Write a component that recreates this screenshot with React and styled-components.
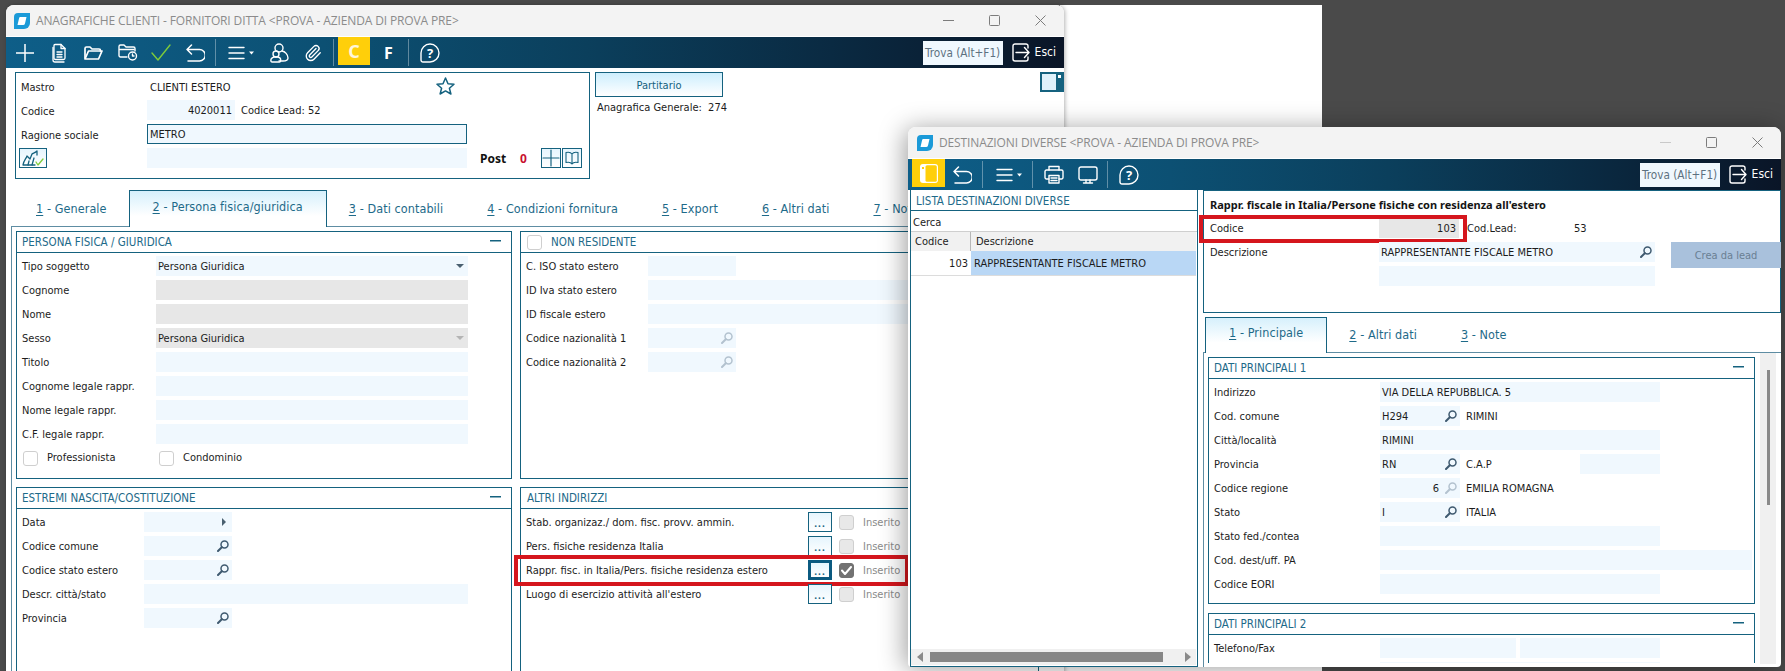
import React from 'react';
import styled, { createGlobalStyle } from 'styled-components';

const TEAL = '#15627f';
const SOFT = '#5e8da3';
const FIELD = '#f0f8fe';
const GREY = '#e7e7e7';

const Global = createGlobalStyle`
  html, body { margin: 0; padding: 0; width: 1785px; height: 671px; overflow: hidden; background: #4a4a4a; }
  * { box-sizing: border-box; }
  body { font-family: "DejaVu Sans Condensed", "Noto Sans", sans-serif; font-size: 11px; color: #1c1c1c; }
`;

const Desktop = styled.div`
  position: relative; width: 1785px; height: 671px; overflow: hidden; background: #4a4a4a;
`;
const BackWindow = styled.div`
  position: absolute; left: 1060px; top: 5px; width: 262px; height: 666px; background: #fff;
`;
const Win = styled.div`
  position: absolute; left: ${p => p.$x}px; top: ${p => p.$y}px; width: ${p => p.$w}px; height: ${p => p.$h}px;
  background: #fff; border-radius: 8px 8px 4px 4px; overflow: hidden;
  display: flex; flex-direction: column;
`;
const WinShadow = styled(Win)`
  box-shadow: ${p => p.$strong ? '-3px 2px 26px rgba(0,0,0,.38)' : '1px 0 4px rgba(0,0,0,.3)'};
  overflow: visible;
`;
const Clip = styled.div`
  display: flex; flex-direction: column; width: 100%; height: 100%; overflow: hidden; border-radius: 8px 8px 4px 4px;
`;
const TitleBar = styled.div`
  flex: none; height: ${p => p.$h}px; background: #f3f3f3; display: flex; align-items: center;
  padding-left: ${p => p.$pl}px; padding-right: 18px; border-bottom: 1px solid #fff;
`;
const TitleText = styled.span`
  font-family: "Open Sans", sans-serif; font-size: 12px; color: #8b8b8b; margin-left: 6px; white-space: nowrap;
  letter-spacing: -.13px;
`;
const Controls = styled.div`
  margin-left: auto; display: flex; gap: 35px; align-items: center; color: #7c7c7c;
`;
const CtlSvg = styled.svg`
  width: 11px; height: 11px; fill: none; stroke: currentColor; stroke-width: 1; display: block;
  opacity: ${p => p.$faint ? .35 : 1};
`;
const Toolbar = styled.div`
  flex: none; height: 31px; display: flex; align-items: center; color: #fff;
  padding-left: ${p => p.$pl}px; padding-right: 8px;
  background: linear-gradient(90deg, #0e5e88 0%, #0c5073 30%, #0b3f5c 55%, #0a2a42 78%, #0a1527 100%);
`;
const Slot = styled.div`
  flex: none; margin-left: ${p => p.$gap || 0}px; display: flex; align-items: center; justify-content: center; height: 100%;
`;
const Sep = styled.div`
  flex: none; width: 1px; height: 27px; background: rgba(255,255,255,.35); margin-left: ${p => p.$gap || 0}px;
`;
const Sv = styled.svg`
  display: block; fill: none; stroke: ${p => p.$c || 'currentColor'}; stroke-width: ${p => p.$sw || 1.4};
  stroke-linecap: round; stroke-linejoin: round;
`;
const YellowKey = styled.div`
  flex: none; height: 28px; align-self: flex-start; width: ${p => p.$w}px; margin-left: ${p => p.$gap || 0}px; background: #ffcf0a;
  display: flex; align-items: center; justify-content: center;
  color: #fff6d8; font: 700 18px "Noto Sans", sans-serif;
`;
const FKey = styled.div`
  flex: none; margin-left: 14px; color: #fff; font: 700 16px "Noto Sans", sans-serif;
`;
const Trova = styled.div`
  margin-left: auto; flex: none; width: 80px; height: 24px; background: #f0f8fe; color: #5d7180;
  display: flex; align-items: center; justify-content: center; font-size: 11.7px; white-space: nowrap;
`;
const EsciText = styled.span`
  margin-left: 5px; font-size: 12px; color: #fff; margin-top: -2px;
`;

const Logo = () => (
  <svg width="16" height="16" viewBox="0 0 16 16" style={{ flex: 'none' }}>
    <path d="M4 0H16V10a6 6 0 0 1-6 6H0V4a4 4 0 0 1 4-4z" fill="#1b9ad8" />
    <path d="M6 4H12.5L11 10.5a2 2 0 0 1-2 1.5H3.5L5 5.5A2 2 0 0 1 6 4z" fill="#fff" />
  </svg>
);
const WinControls = ({ faint }) => (
  <Controls>
    <CtlSvg $faint={faint} viewBox="0 0 11 11"><path d="M0 5.5H11" /></CtlSvg>
    <CtlSvg viewBox="0 0 11 11"><rect x=".5" y=".5" width="10" height="10" rx="1" /></CtlSvg>
    <CtlSvg viewBox="0 0 11 11"><path d="M.5 .5L10.5 10.5M10.5 .5L.5 10.5" /></CtlSvg>
  </Controls>
);
const PlusIc = () => <Sv width="18" height="18" viewBox="0 0 18 18" $sw={1.5}><path d="M9 0V18M0 9H18" /></Sv>;
const DocIc = () => (
  <Sv width="16" height="20" viewBox="0 0 16 20" $sw={1.3}>
    <path d="M3 1.5h6l4 4V15a1.5 1.5 0 0 1-1.5 1.5h-8A1.5 1.5 0 0 1 2 15V2.5a1 1 0 0 1 1-1z" />
    <path d="M9 1.5V5.5H13M5 9H10M5 11.5H10M5 14H10" />
    <path d="M1 4.5V17a2 2 0 0 0 2 2H12" />
  </Sv>
);
const FolderIc = () => (
  <Sv width="19" height="14" viewBox="0 0 19 14" $sw={1.7}>
    <path d="M1 12V2.5A1.5 1.5 0 0 1 2.5 1H6l2 2h7a1.5 1.5 0 0 1 1.5 1.5V5" />
    <path d="M1 13H14.5L18 5H4.5L1 13z" />
  </Sv>
);
const FolderClockIc = () => (
  <Sv width="20" height="17" viewBox="0 0 20 17" $sw={1.4}>
    <path d="M9 13H2.5A1.5 1.5 0 0 1 1 11.5V2.5A1.5 1.5 0 0 1 2.5 1H6l2 2h7.5A1.5 1.5 0 0 1 17 4.5V7" />
    <path d="M1.5 5.5H16" />
    <circle cx="14.5" cy="12" r="4" />
    <path d="M14.5 10V12H16" />
  </Sv>
);
const CheckIc = () => <Sv width="20" height="17" viewBox="0 0 20 17" $c="#7ecb3a" $sw={1.4}><path d="M1 9L7 16L19 1" /></Sv>;
const UndoIc = () => (
  <Sv width="19" height="18" viewBox="0 0 19 18" $sw={1.5}>
    <path d="M5.5 1L1 5.5L5.5 10M1 5.5H13.5a4.5 4.5 0 0 1 0 11.5H2" />
  </Sv>
);
const MenuIc = () => (
  <Sv width="26" height="14" viewBox="0 0 26 14" $sw={1.4}>
    <path d="M1 1.5H16M1 7H16M1 12.5H16" />
    <path d="M21 5.5H26L23.5 8.5z" fill="#fff" stroke="none" />
  </Sv>
);
const UsersIc = () => (
  <Sv width="19" height="20" viewBox="0 0 19 20" $sw={1.4}>
    <circle cx="9" cy="5" r="4" />
    <circle cx="6" cy="11" r="3" />
    <path d="M12 8c3 .5 6 3.5 6 7 0 2-2 3-5 3H9" />
    <path d="M1 18c-.6-2 1-3.5 3-4h4c2 .5 3 2 2.5 4 0 .6-.5 1-1 1H2c-.5 0-1-.4-1-1z" />
  </Sv>
);
const ClipIc = () => (
  <Sv width="18" height="20" viewBox="0 0 24 24" $sw={1.8}>
    <path d="m16 6-8.414 8.586a2 2 0 0 0 2.829 2.829l8.414-8.586a4 4 0 1 0-5.657-5.657l-8.379 8.551a6 6 0 1 0 8.485 8.485l8.379-8.551" />
  </Sv>
);
const HelpIc = () => (
  <Sv width="20" height="20" viewBox="0 0 20 20" $sw={1.4}>
    <path d="M10 1a9 9 0 0 1 0 18H3a2 2 0 0 1-2-2V10a9 9 0 0 1 9-9z" />
    <text x="10" y="15" textAnchor="middle" fontSize="13" fontFamily="Noto Sans" fontWeight="700" fill="#fff" stroke="none">?</text>
  </Sv>
);
const EsciIc = () => (
  <Sv width="18" height="19" viewBox="0 0 18 19" $sw={1.4}>
    <path d="M16 5V3a2 2 0 0 0-2-2H3a2 2 0 0 0-2 2v13a2 2 0 0 0 2 2h11a2 2 0 0 0 2-2v-2" />
    <path d="M4 9.5H17M12.5 4.5L17 9.5L12.5 14.5" />
  </Sv>
);
const PrinterIc = () => (
  <Sv width="20" height="19" viewBox="0 0 20 19" $sw={1.4}>
    <path d="M5 5V1.5H15V5" />
    <path d="M5 14H2.5A1.5 1.5 0 0 1 1 12.5V6.5A1.5 1.5 0 0 1 2.5 5h15A1.5 1.5 0 0 1 19 6.5v6a1.5 1.5 0 0 1-1.5 1.5H15" />
    <rect x="5" y="10.5" width="10" height="7.5" />
    <path d="M7 13H13M7 15.5H13" />
  </Sv>
);
const MonitorIc = () => (
  <Sv width="20" height="18" viewBox="0 0 20 18" $sw={1.4}>
    <rect x="1" y="1" width="18" height="13" rx="2" />
    <path d="M8 14V17M12 14V17M5.5 17H14.5" />
  </Sv>
);
const PanelIc = () => (
  <svg width="18" height="19" viewBox="0 0 18 19" style={{ display: 'block' }}>
    <rect x="0" y="0" width="18" height="19" rx="3" fill="#fff" />
    <rect x="5.5" y="1.2" width="11.3" height="16.6" rx="1.6" fill="#ffcf0a" />
    <rect x="2" y="3" width="2" height="2" fill="#ffcf0a" />
  </svg>
);
const SearchIc = ({ light }) => (
  <Sv width="12" height="12" viewBox="0 0 12 12" $c={light ? '#b3c2cf' : '#3f5a70'} $sw={1.5}>
    <circle cx="7.5" cy="4.5" r="3.5" />
    <path d="M4.8 7.2L1 11" strokeWidth="2" />
  </Sv>
);

const Body = styled.div`
  flex: 1; min-height: 0; display: flex; flex-direction: column;
`;
const TopArea = styled.div`
  flex: none; height: 122px; padding: 4px 0 0 9px; display: flex; align-items: flex-start;
`;
const MasterBox = styled.div`
  flex: none; width: 575px; height: 107px; border: 1px solid ${TEAL}; padding: 3px 0 0 5px;
  display: flex; flex-direction: column; gap: 4px;
`;
const MasterRow = styled.div`
  height: 20px; display: flex; align-items: center; position: relative;
`;
const MasterLabel = styled.span`
  flex: none; width: 126px; padding-top: 2px;
`;
const Field = styled.div`
  flex: none; width: ${p => p.$w}px; height: 20px; background: ${p => p.$off ? GREY : FIELD};
  border: ${p => p.$boxed ? `1px solid ${TEAL}` : 'none'};
  display: flex; align-items: center; justify-content: ${p => p.$right ? 'flex-end' : 'flex-start'};
  padding: 0 ${p => p.$pr ?? 3}px 0 ${p => p.$pl ?? 2}px; white-space: nowrap;
  margin-left: ${p => p.$gap || 0}px;
`;
const FieldEnd = styled.span`
  margin-left: auto; display: flex; align-items: center;
`;
const FieldNum = styled.span`
  margin-right: 6px; margin-left: auto;
`;
const Note = styled.span`
  margin-left: ${p => p.$gap || 0}px; white-space: nowrap; width: ${p => p.$w ? p.$w + 'px' : 'auto'}; flex: none; padding-top: 1px;
`;
const Value = styled.span`
  margin-left: ${p => p.$gap || 0}px; white-space: nowrap; padding-top: ${p => p.$pt || 0}px;
`;
const StarSlot = styled.span`
  position: absolute; left: 415px; top: 1px; display: block;
`;
const SquareBtn = styled.div`
  flex: none; width: ${p => p.$w || 20}px; height: 20px; border: 1px solid ${TEAL}; display: flex; align-items: center; justify-content: center;
  margin-left: ${p => p.$gap || 0}px; background: linear-gradient(#e6f5fd, #fff);
`;
const Post = styled.b`
  margin-left: 13px; width: 27px; flex: none; font-family: "Noto Sans", sans-serif; font-size: 12px; color: #111;
`;
const PostCount = styled.b`
  margin-left: 13px; width: 15px; flex: none; font-family: "Noto Sans", sans-serif; font-size: 12px; color: #c8102e;
`;
const SideCol = styled.div`
  flex: none; margin-left: 5px; width: 160px; display: flex; flex-direction: column;
`;
const Partitario = styled.div`
  width: 128px; height: 25px; border: 1px solid ${TEAL}; color: ${TEAL}; font-size: 11px; padding-top: 1px;
  background: linear-gradient(#cdeefd, #fff); display: flex; align-items: center; justify-content: center;
`;
const SideNote = styled.div`
  margin: 4px 0 0 2px; white-space: nowrap;
`;
const ToggleSlot = styled.div`
  margin-left: auto; flex: none;
`;
const Tabs = styled.div`
  flex: none; height: ${p => p.$h}px; display: flex; align-items: stretch; margin-left: ${p => p.$ml}px; margin-top: ${p => p.$mt || 0}px;
`;
const Tab = styled.div`
  flex: none; padding: 0 ${p => p.$active ? 23 : 22}px; display: flex; align-items: center; font-size: 12.5px; color: #1e6a89;
  white-space: nowrap; letter-spacing: .08px;
  ${p => p.$active ? `
    border: 1px solid ${TEAL}; border-bottom: none; position: relative; z-index: 1; margin-bottom: -1px;
    background: linear-gradient(#d6f0fc, #fff 70%); padding-bottom: 6px;
  ` : ''}
`;
const Panel1 = styled.div`
  flex: 1; margin-left: 5px; border-top: 1px solid ${SOFT}; border-left: 1px solid ${SOFT}; padding: 4px 0 0 4px;
  display: grid; grid-template-columns: 496px 519px; grid-template-rows: 248px 240px; gap: 8px;
`;
const Group = styled.section`
  border: 1px solid ${TEAL}; height: ${p => p.$h ? p.$h + 'px' : 'auto'}; width: ${p => p.$w ? p.$w + 'px' : 'auto'};
  margin-top: ${p => p.$mt || 0}px; flex: none;
`;
const GroupHead = styled.header`
  height: 20px; border-bottom: 1px solid ${TEAL}; box-sizing: content-box; display: flex; align-items: center;
  padding: 0 10px 0 ${p => p.$pl ?? 5}px; color: #1e6a89; font-size: 11.5px; white-space: nowrap;
`;
const Minus = styled.i`
  margin-left: auto; width: 11px; height: 1px; background: ${TEAL}; display: block; margin-top: -3px; box-shadow: 0 .5px 0 ${TEAL};
`;
const GroupBody = styled.div`
  padding: 3px 0 0 5px; display: flex; flex-direction: column; gap: 4px;
`;
const Row = styled.div`
  height: 20px; display: flex; align-items: center; position: relative; flex: none; white-space: nowrap;
`;
const Label = styled.span`
  flex: none; width: ${p => p.$w}px; padding-top: 1px;
`;
const Caret = styled.i`
  margin-left: auto; width: 0; height: 0; border-left: 4px solid transparent; border-right: 4px solid transparent;
  border-top: 4px solid ${p => p.$off ? '#b4b4b4' : '#4a6070'}; display: block;
`;
const CaretRight = styled.i`
  margin-left: auto; margin-right: 3px; width: 0; height: 0; border-top: 4px solid transparent; border-bottom: 4px solid transparent;
  border-left: 4px solid #4a6070; display: block; margin-top: -1px;
`;
const Check = styled.span`
  flex: none; width: 15px; height: 15px; border: 1px solid #cfcfcf; border-radius: 3px; display: flex; align-items: center; justify-content: center;
  background: ${p => p.$on ? '#727272' : p.$off ? '#e8e8e8' : '#fff'}; border-color: ${p => p.$on ? '#727272' : '#cfcfcf'};
  margin-left: ${p => p.$gap || 0}px;
`;
const CheckLabel = styled.span`
  flex: none; margin-left: 9px; padding-bottom: 2px; width: ${p => p.$w ? p.$w + 'px' : 'auto'};
`;
const CheckRow = styled(Row)`
  padding-left: 1px;
`;
const Dots = styled.div`
  flex: none; width: 24px; height: 20px; border: ${p => p.$focus ? `3px solid #0b5a80` : `1px solid ${TEAL}`};
  color: ${TEAL}; display: flex; align-items: flex-end; justify-content: center; padding-bottom: ${p => p.$focus ? 1 : 3}px;
  font: 700 10px "Noto Sans", sans-serif; letter-spacing: 1px; background: linear-gradient(#e6f5fd, #fff); line-height: 1;
`;
const Inserito = styled.span`
  flex: none; margin-left: 9px; color: #8a8a8a;
`;
const RedFrame = styled.div`
  position: absolute; left: ${p => p.$x}px; top: ${p => p.$y}px; width: ${p => p.$w}px; height: ${p => p.$h}px;
  border: 4px solid #d5161d; pointer-events: none;
`;
const Split = styled.div`
  flex: 1; min-height: 0; display: flex; padding-left: 2px;
`;
const ListPane = styled.div`
  flex: none; width: 288px; border: 1px solid ${TEAL}; border-top: none; display: flex; flex-direction: column; padding-bottom: 1px;
`;
const ListHead = styled.div`
  flex: none; height: 21px; border-bottom: 1px solid ${TEAL}; padding: 1px 0 0 5px; display: flex; align-items: center;
  color: #1e6a89; font-size: 11.5px;
`;
const Search = styled.div`
  flex: none; height: 21px; border-bottom: 1px solid #cfcfcf; padding: 2px 0 0 2px; display: flex; align-items: center;
`;
const Grid = styled.div`
  display: grid; grid-template-columns: 60px 1fr; margin-right: 1px;
`;
const HeadCell = styled.div`
  height: 19px; background: #f1f1f1; display: flex; align-items: center; padding-left: ${p => p.$pl}px;
  border-right: ${p => p.$div ? '1px solid #b7b7b7' : 'none'};
`;
const Cell = styled.div`
  height: 25px; display: flex; align-items: center; border-bottom: 1px solid #dcdcdc; white-space: nowrap;
  justify-content: ${p => p.$right ? 'flex-end' : 'flex-start'}; padding: 0 3px;
  background: ${p => p.$sel ? '#b9d7f5' : '#fff'};
`;
const HScroll = styled.div`
  margin-top: auto; height: 16px; background: #f0f0f0; display: flex; align-items: center; margin-right: 1px; padding: 0 6px;
`;
const ArrowL = styled.i`
  width: 0; height: 0; border-top: 5px solid transparent; border-bottom: 5px solid transparent; border-right: 6px solid #8a8a8a; display: block; flex: none;
`;
const ArrowR = styled.i`
  width: 0; height: 0; border-top: 5px solid transparent; border-bottom: 5px solid transparent; border-left: 6px solid #8a8a8a; display: block; flex: none;
`;
const HThumb = styled.div`
  flex: none; width: 233px; height: 10px; background: #868686; margin: 0 22px 0 7px;
`;
const DetailPane = styled.div`
  flex: none; width: 578px; margin-left: 5px; display: flex; flex-direction: column;
`;
const Header2 = styled.div`
  flex: none; height: 123px; border: 1px solid ${TEAL}; padding: 4px 0 0 6px;
`;
const Header2Title = styled.div`
  height: 23px; font: 700 11px "Noto Sans", sans-serif; color: #151515; padding-top: 2px; white-space: nowrap;
`;
const Header2Rows = styled.div`
  display: flex; flex-direction: column; gap: 4px;
`;
const Crea = styled.div`
  flex: none; width: 110px; height: 26px; margin-left: 16px; background: #a9c1dc; color: #6a7f93; display: flex; align-items: center; justify-content: center;
  align-self: flex-start;
`;
const Panel2 = styled.div`
  flex: 1; min-height: 0; border-top: 1px solid ${SOFT}; border-left: 1px solid ${SOFT}; display: flex; padding-left: 4px;
`;
const PanelClip = styled.div`
  flex: none; width: 547px; height: 310px; padding-top: 4px; overflow: hidden;
`;
const VScroll = styled.div`
  flex: none; width: 16px; height: 311px; margin-left: 5px; background: #f0f0f0; padding: 17px 0 0 7px;
`;
const VThumb = styled.div`
  width: 3px; height: 135px; background: #8a8a8a;
`;

const TrovaEsci = () => (
  <>
    <Trova>Trova (Alt+F1)</Trova>
    <Slot $gap={9}><EsciIc /></Slot>
    <EsciText>Esci</EsciText>
  </>
);
const Lens = ({ light }) => <FieldEnd><SearchIc light={light} /></FieldEnd>;
const Tick = () => (
  <Sv width="11" height="9" viewBox="0 0 11 9" $c="#fff" $sw={2}><path d="M1 4.5L4 8L10 1" /></Sv>
);
const Bare = ({ label, w, fw, off }) => (
  <Row><Label $w={w}>{label}</Label><Field $w={fw} $off={off} /></Row>
);
const U = styled.u`text-underline-offset: 2px;`;

const personaRows = ['Titolo', 'Cognome legale rappr.', 'Nome legale rappr.', 'C.F. legale rappr.'];
const altri = [
  ['Stab. organizaz./ dom. fisc. provv. ammin.'],
  ['Pers. fisiche residenza Italia'],
  ['Rappr. fisc. in Italia/Pers. fisiche residenza estero', true],
  ["Luogo di esercizio attività all'estero"],
];

export default function App() {
  return (
    <Desktop>
      <Global />
      <BackWindow />
      <WinShadow $x={6} $y={5} $w={1058} $h={680}>
        <Clip>
          <TitleBar $h={32} $pl={8}>
            <Logo />
            <TitleText>ANAGRAFICHE CLIENTI - FORNITORI DITTA &lt;PROVA - AZIENDA DI PROVA PRE&gt;</TitleText>
            <WinControls />
          </TitleBar>
          <Toolbar $pl={10}>
            <Slot><PlusIc /></Slot>
            <Slot $gap={18}><DocIc /></Slot>
            <Slot $gap={16}><FolderIc /></Slot>
            <Slot $gap={15}><FolderClockIc /></Slot>
            <Slot $gap={13}><CheckIc /></Slot>
            <Slot $gap={15}><UndoIc /></Slot>
            <Sep $gap={10} />
            <Slot $gap={12}><MenuIc /></Slot>
            <Slot $gap={16}><UsersIc /></Slot>
            <Slot $gap={15}><ClipIc /></Slot>
            <Sep $gap={11} />
            <YellowKey $w={32} $gap={4}>C</YellowKey>
            <FKey>F</FKey>
            <Sep $gap={15} />
            <Slot $gap={11}><HelpIc /></Slot>
            <TrovaEsci />
          </Toolbar>
          <Body>
            <TopArea>
              <MasterBox>
                <MasterRow>
                  <MasterLabel>Mastro</MasterLabel>
                  <Value $gap={3} $pt={2}>CLIENTI ESTERO</Value>
                  <StarSlot>
                    <Sv width="19" height="18" viewBox="0 0 19 18" $c={TEAL} $sw={1.5}>
                      <path d="M9.5 1L12 6.8L18 7.3L13.4 11.2L14.9 17L9.5 13.9L4.1 17L5.6 11.2L1 7.3L7 6.8z" />
                    </Sv>
                  </StarSlot>
                </MasterRow>
                <MasterRow>
                  <MasterLabel>Codice</MasterLabel>
                  <Field $w={88} $right>4020011</Field>
                  <Note $gap={6}>Codice Lead: 52</Note>
                </MasterRow>
                <MasterRow>
                  <MasterLabel>Ragione sociale</MasterLabel>
                  <Field $w={320} $boxed>METRO</Field>
                </MasterRow>
                <MasterRow>
                  <SquareBtn $w={28} $gap={-2}>
                    <Sv width="22" height="17" viewBox="0 0 22 17" $c={TEAL} $sw={1.3}>
                      <path d="M1 15C2 10 4 9 5 6L8 9L10 4C11 3 13 3 15 1V5M1 15H13" />
                      <path d="M6 15L7 11M10 15L12 8" />
                      <path d="M14 12L16 15L21 9" stroke="#7ecb3a" />
                    </Sv>
                  </SquareBtn>
                  <Field $w={320} $gap={100} />
                  <Post>Post</Post>
                  <PostCount>0</PostCount>
                  <SquareBtn $gap={6}>
                    <Sv width="18" height="18" viewBox="0 0 18 18" $c={TEAL} $sw={1.2}><path d="M9 1V17M1 9H17" /></Sv>
                  </SquareBtn>
                  <SquareBtn $gap={1}>
                    <Sv width="16" height="14" viewBox="0 0 16 14" $c={TEAL} $sw={1.1}>
                      <path d="M8 3C7 1.5 4 1 2 1.5V11.5C4 11 7 11.5 8 13C9 11.5 12 11 14 11.5V1.5C12 1 9 1.5 8 3zM8 3V13" />
                    </Sv>
                  </SquareBtn>
                </MasterRow>
              </MasterBox>
              <SideCol>
                <Partitario>Partitario</Partitario>
                <SideNote>Anagrafica Generale:&nbsp; 274</SideNote>
              </SideCol>
              <ToggleSlot>
                <svg width="24" height="20" viewBox="0 0 24 20" style={{ display: 'block' }}>
                  <rect width="24" height="20" fill="#15627f" />
                  <rect x="2" y="2" width="14" height="16" fill="#dff1fb" />
                  <rect x="18" y="3" width="3" height="3" fill="#fff" />
                </svg>
              </ToggleSlot>
            </TopArea>
            <Tabs $h={36} $ml={8}>
              <Tab><U>1</U>&nbsp;- Generale</Tab>
              <Tab $active><U>2</U>&nbsp;- Persona fisica/giuridica</Tab>
              <Tab><U>3</U>&nbsp;- Dati contabili</Tab>
              <Tab><U>4</U>&nbsp;- Condizioni fornitura</Tab>
              <Tab><U>5</U>&nbsp;- Export</Tab>
              <Tab><U>6</U>&nbsp;- Altri dati</Tab>
              <Tab><U>7</U>&nbsp;- Note</Tab>
            </Tabs>
            <Panel1>
              <Group>
                <GroupHead>PERSONA FISICA / GIURIDICA<Minus /></GroupHead>
                <GroupBody>
                  <Row>
                    <Label $w={134}>Tipo soggetto</Label>
                    <Field $w={312} $pr={4}>Persona Giuridica<Caret /></Field>
                  </Row>
                  <Bare label="Cognome" w={134} fw={312} off />
                  <Bare label="Nome" w={134} fw={312} off />
                  <Row>
                    <Label $w={134}>Sesso</Label>
                    <Field $w={312} $off $pr={4}>Persona Giuridica<Caret $off /></Field>
                  </Row>
                  {personaRows.map(l => <Bare key={l} label={l} w={134} fw={312} />)}
                  <CheckRow>
                    <Check />
                    <CheckLabel $w={112}>Professionista</CheckLabel>
                    <Check />
                    <CheckLabel>Condominio</CheckLabel>
                  </CheckRow>
                </GroupBody>
              </Group>
              <Group>
                <GroupHead $pl={6}><Check /><Value $gap={9}>NON RESIDENTE</Value><Minus /></GroupHead>
                <GroupBody>
                  <Bare label="C. ISO stato estero" w={122} fw={88} />
                  <Bare label="ID Iva stato estero" w={122} fw={380} />
                  <Bare label="ID fiscale estero" w={122} fw={380} />
                  <Row><Label $w={122}>Codice nazionalità 1</Label><Field $w={88}><Lens light /></Field></Row>
                  <Row><Label $w={122}>Codice nazionalità 2</Label><Field $w={88}><Lens light /></Field></Row>
                </GroupBody>
              </Group>
              <Group>
                <GroupHead>ESTREMI NASCITA/COSTITUZIONE<Minus /></GroupHead>
                <GroupBody>
                  <Row><Label $w={122}>Data</Label><Field $w={88}><CaretRight /></Field></Row>
                  <Row><Label $w={122}>Codice comune</Label><Field $w={88}><Lens /></Field></Row>
                  <Row><Label $w={122}>Codice stato estero</Label><Field $w={88}><Lens /></Field></Row>
                  <Bare label="Descr. città/stato" w={122} fw={324} />
                  <Row><Label $w={122}>Provincia</Label><Field $w={88}><Lens /></Field></Row>
                </GroupBody>
              </Group>
              <Group>
                <GroupHead $pl={6}>ALTRI INDIRIZZI<Minus /></GroupHead>
                <GroupBody>
                  {altri.map(([label, on]) => (
                    <Row key={label}>
                      <Label $w={282}>{label}</Label>
                      <Dots $focus={on}>...</Dots>
                      <Check $gap={7} $on={on} $off={!on}>{on && <Tick />}</Check>
                      <Inserito>Inserito</Inserito>
                      {on && <RedFrame $x={-12} $y={-5} $w={395} $h={31} />}
                    </Row>
                  ))}
                </GroupBody>
              </Group>
            </Panel1>
          </Body>
        </Clip>
      </WinShadow>

      <WinShadow $x={908} $y={127} $w={873} $h={540} $strong>
        <Clip>
          <TitleBar $h={32} $pl={9}>
            <Logo />
            <TitleText>DESTINAZIONI DIVERSE &lt;PROVA - AZIENDA DI PROVA PRE&gt;</TitleText>
            <WinControls faint />
          </TitleBar>
          <Toolbar $pl={4}>
            <YellowKey $w={33}><PanelIc /></YellowKey>
            <Slot $gap={8}><UndoIc /></Slot>
            <Sep $gap={10} />
            <Slot $gap={13}><MenuIc /></Slot>
            <Sep $gap={10} />
            <Slot $gap={11}><PrinterIc /></Slot>
            <Slot $gap={14}><MonitorIc /></Slot>
            <Sep $gap={9} />
            <Slot $gap={11}><HelpIc /></Slot>
            <TrovaEsci />
          </Toolbar>
          <Split>
            <ListPane>
              <ListHead>LISTA DESTINAZIONI DIVERSE</ListHead>
              <Search>Cerca</Search>
              <Grid>
                <HeadCell $pl={4} $div>Codice</HeadCell>
                <HeadCell $pl={5}>Descrizione</HeadCell>
                <Cell $right>103</Cell>
                <Cell $sel>RAPPRESENTANTE FISCALE METRO</Cell>
              </Grid>
              <HScroll><ArrowL /><HThumb /><ArrowR /></HScroll>
            </ListPane>
            <DetailPane>
              <Header2>
                <Header2Title>Rappr. fiscale in Italia/Persone fisiche con residenza all'estero</Header2Title>
                <Header2Rows>
                  <Row>
                    <Label $w={169}>Codice</Label>
                    <Field $w={80} $off $right>103</Field>
                    <Note $gap={8} $w={107}>Cod.Lead:</Note>
                    <Note>53</Note>
                    <RedFrame $x={-11} $y={-3} $w={268} $h={28} />
                  </Row>
                  <Row>
                    <Label $w={169}>Descrizione</Label>
                    <Field $w={276}>RAPPRESENTANTE FISCALE METRO<Lens /></Field>
                    <Crea>Crea da lead</Crea>
                  </Row>
                  <Row>
                    <Label $w={169} />
                    <Field $w={276} />
                  </Row>
                </Header2Rows>
              </Header2>
              <Tabs $h={35} $ml={2} $mt={4}>
                <Tab $active><U>1</U>&nbsp;- Principale</Tab>
                <Tab><U>2</U>&nbsp;- Altri dati</Tab>
                <Tab><U>3</U>&nbsp;- Note</Tab>
              </Tabs>
              <Panel2>
                <PanelClip>
                  <Group $h={247}>
                    <GroupHead>DATI PRINCIPALI 1<Minus /></GroupHead>
                    <GroupBody>
                      <Row><Label $w={166}>Indirizzo</Label><Field $w={280}>VIA DELLA REPUBBLICA. 5</Field></Row>
                      <Row><Label $w={166}>Cod. comune</Label><Field $w={80}>H294<Lens /></Field><Note $gap={6}>RIMINI</Note></Row>
                      <Row><Label $w={166}>Città/località</Label><Field $w={280}>RIMINI</Field></Row>
                      <Row>
                        <Label $w={166}>Provincia</Label><Field $w={80}>RN<Lens /></Field>
                        <Note $gap={6} $w={114}>C.A.P</Note><Field $w={80} />
                      </Row>
                      <Row><Label $w={166}>Codice regione</Label><Field $w={80}><FieldNum>6</FieldNum><SearchIc light /></Field><Note $gap={6}>EMILIA ROMAGNA</Note></Row>
                      <Row><Label $w={166}>Stato</Label><Field $w={80}>I<Lens /></Field><Note $gap={6}>ITALIA</Note></Row>
                      <Bare label="Stato fed./contea" w={166} fw={280} />
                      <Bare label="Cod. dest/uff. PA" w={166} fw={372} />
                      <Bare label="Codice EORI" w={166} fw={280} />
                    </GroupBody>
                  </Group>
                  <Group $h={60} $mt={9}>
                    <GroupHead>DATI PRINCIPALI 2<Minus /></GroupHead>
                    <GroupBody>
                      <Row><Label $w={166}>Telefono/Fax</Label><Field $w={136} /><Field $w={140} $gap={4} /></Row>
                      <Row><Label $w={166} /><Field $w={280} /></Row>
                    </GroupBody>
                  </Group>
                </PanelClip>
                <VScroll><VThumb /></VScroll>
              </Panel2>
            </DetailPane>
          </Split>
        </Clip>
      </WinShadow>
    </Desktop>
  );
}
